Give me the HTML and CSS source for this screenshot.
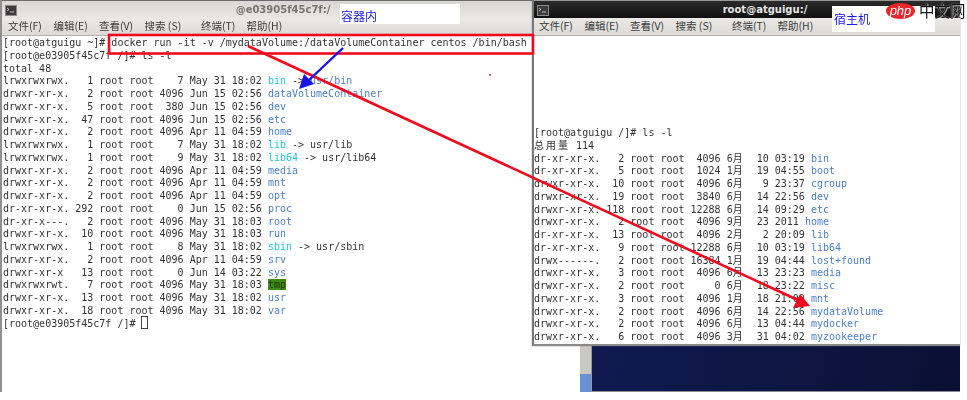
FILE: index.html
```html
<!DOCTYPE html>
<html lang="zh">
<head>
<meta charset="utf-8">
<title>docker volume</title>
<link rel="stylesheet" href="styles.css">
</head>
<body>
<main class="desktop">
  <section class="strip">
    <div class="scroll"><div class="scroll-thumb"></div></div>
    <div class="wallpaper"></div>
  </section>

  <section class="window win-left">
    <header class="titlebar">
      <svg class="term-icon" viewBox="0 0 12 11"><rect x=".5" y=".5" width="11" height="10" fill="#3c3c3c" stroke="#8a8a8a"/><path d="M2 3l2 1.5L2 6M5 7h4" fill="none" stroke="#ddd" stroke-width=".8"/></svg>
      <span class="title-text">@e03905f45c7f:/</span>
    </header>
    <nav class="menubar">
      <span>文件(F)</span><span>编辑(E)</span><span>查看(V)</span><span class="m-search">搜索 (S)</span><span>终端(T)</span><span>帮助(H)</span>
    </nav>
    <pre class="term">[root@atguigu ~]# docker run -it -v /mydataVolume:/dataVolumeContainer centos /bin/bash
[root@e03905f45c7f /]# ls -l
total 48
lrwxrwxrwx.   1 root root    7 May 31 18:02 <span class="ln">bin</span> -&gt; <span class="dir">usr/bin</span>
drwxr-xr-x.   2 root root 4096 Jun 15 02:56 <span class="dir">dataVolumeContainer</span>
drwxr-xr-x.   5 root root  380 Jun 15 02:56 <span class="dir">dev</span>
drwxr-xr-x.  47 root root 4096 Jun 15 02:56 <span class="dir">etc</span>
drwxr-xr-x.   2 root root 4096 Apr 11 04:59 <span class="dir">home</span>
lrwxrwxrwx.   1 root root    7 May 31 18:02 <span class="ln">lib</span> -&gt; <span class="target">usr/lib</span>
lrwxrwxrwx.   1 root root    9 May 31 18:02 <span class="ln">lib64</span> -&gt; <span class="target">usr/lib64</span>
drwxr-xr-x.   2 root root 4096 Apr 11 04:59 <span class="dir">media</span>
drwxr-xr-x.   2 root root 4096 Apr 11 04:59 <span class="dir">mnt</span>
drwxr-xr-x.   2 root root 4096 Apr 11 04:59 <span class="dir">opt</span>
dr-xr-xr-x. 292 root root    0 Jun 15 02:56 <span class="dir">proc</span>
dr-xr-x---.   2 root root 4096 May 31 18:03 <span class="dir">root</span>
drwxr-xr-x.  10 root root 4096 May 31 18:03 <span class="dir">run</span>
lrwxrwxrwx.   1 root root    8 May 31 18:02 <span class="ln">sbin</span> -&gt; <span class="target">usr/sbin</span>
drwxr-xr-x.   2 root root 4096 Apr 11 04:59 <span class="dir">srv</span>
drwxr-xr-x   13 root root    0 Jun 14 03:22 <span class="dir">sys</span>
drwxrwxrwt.   7 root root 4096 May 31 18:03 <span class="sticky">tmp</span>
drwxr-xr-x.  13 root root 4096 May 31 18:02 <span class="dir">usr</span>
drwxr-xr-x.  18 root root 4096 May 31 18:02 <span class="dir">var</span>
[root@e03905f45c7f /]# <span class="cursor"></span></pre>
  </section>

  <section class="window win-right">
    <header class="titlebar dark">
      <svg class="term-icon" viewBox="0 0 12 11"><rect x=".5" y=".5" width="11" height="10" fill="#3c3c3c" stroke="#8a8a8a"/><path d="M2 3l2 1.5L2 6M5 7h4" fill="none" stroke="#ddd" stroke-width=".8"/></svg>
      <span class="title-text">root@atguigu:/</span>
    </header>
    <nav class="menubar">
      <span>文件(F)</span><span>编辑(E)</span><span>查看(V)</span><span class="m-search">搜索 (S)</span><span>终端(T)</span><span>帮助(H)</span>
    </nav>
    <pre class="term term-right">[root@atguigu /]# ls -l
<span class="wide">总用量</span> 114
dr-xr-xr-x.   2 root root  4096 6<span class="wide">月</span>  10 03:19 <span class="dir">bin</span>
dr-xr-xr-x.   5 root root  1024 1<span class="wide">月</span>  19 04:55 <span class="dir">boot</span>
drwxr-xr-x.  10 root root  4096 6<span class="wide">月</span>   9 23:37 <span class="dir">cgroup</span>
drwxr-xr-x.  19 root root  3840 6<span class="wide">月</span>  14 22:56 <span class="dir">dev</span>
drwxr-xr-x. 118 root root 12288 6<span class="wide">月</span>  14 09:29 <span class="dir">etc</span>
drwxr-xr-x.   2 root root  4096 9<span class="wide">月</span>  23 2011 <span class="dir">home</span>
dr-xr-xr-x.  13 root root  4096 2<span class="wide">月</span>   2 20:09 <span class="dir">lib</span>
dr-xr-xr-x.   9 root root 12288 6<span class="wide">月</span>  10 03:19 <span class="dir">lib64</span>
drwx------.   2 root root 16384 1<span class="wide">月</span>  19 04:44 <span class="dir">lost+found</span>
drwxr-xr-x.   3 root root  4096 6<span class="wide">月</span>  13 23:23 <span class="dir">media</span>
drwxr-xr-x.   2 root root     0 6<span class="wide">月</span>  18 23:22 <span class="dir">misc</span>
drwxr-xr-x.   3 root root  4096 1<span class="wide">月</span>  18 21:00 <span class="dir">mnt</span>
drwxr-xr-x.   2 root root  4096 6<span class="wide">月</span>  14 22:56 <span class="dir">mydataVolume</span>
drwxr-xr-x.   2 root root  4096 6<span class="wide">月</span>  13 04:44 <span class="dir">mydocker</span>
drwxr-xr-x.   6 root root  4096 3<span class="wide">月</span>  31 04:02 <span class="dir">myzookeeper</span></pre>
  </section>

  <div class="label label-left">容器内</div>
  <div class="label label-right">宿主机</div>

  <svg class="marks" viewBox="0 0 967 400" aria-hidden="true">
    <rect x="109" y="35" width="424" height="18.5" fill="none" stroke="#f00a1e" stroke-width="2.6"/>
    <line x1="248" y1="46" x2="800" y2="301" stroke="#f00a1e" stroke-width="2.6"/>
    <polygon points="810,306 793,308 800,294" fill="#f00a1e"/>
    <line x1="343" y1="48" x2="308" y2="81" stroke="#1414e6" stroke-width="2.4"/>
    <polygon points="299,89 304,74 314,84" fill="#1414e6"/>
    <circle cx="490" cy="75" r="1" fill="#e8283c"/>
  </svg>

  <div class="watermark">
    <span class="php">php</span><span class="cn">中文网</span>
  </div>
</main>
</body>
</html>
```

FILE: styles.css
```css
* { box-sizing: border-box; }
html, body { margin: 0; background: #fff; overflow: hidden; }

.desktop {
  position: relative;
  width: 967px;
  height: 400px;
  background: #fff;
}

.window {
  position: absolute;
  top: 0;
  display: flex;
  flex-direction: column;
  background: #fff;
  filter: blur(.45px);
}
.win-left {
  left: 0;
  width: 532px;
  height: 392px;
  border-left: 2px solid #8f8f8f;
}
.win-right {
  left: 532px;
  width: 428px;
  height: 346px;
  border-left: 2px solid #777;
  border-bottom: 2px solid #8a8a8a;
  box-shadow: 0 0 1px #666;
}

.titlebar {
  position: relative;
  flex: none;
  height: 18px;
  display: flex;
  align-items: center;
  justify-content: center;
  background: linear-gradient(#d9d7d3, #e9e7e3);
  border-top: 1px solid #6b6b6b;
}
.titlebar.dark {
  background: linear-gradient(#2c2c2c, #101010);
  border-top-color: #999;
}
.term-icon {
  position: absolute;
  left: 3px;
  top: 4px;
  width: 12px;
  height: 11px;
}
.title-text {
  font: bold 10px "DejaVu Sans", sans-serif;
  color: #77756f;
  white-space: nowrap;
}
.win-left .title-text { margin-left: 32px; }
.dark .title-text { color: #e6e6e6; margin-left: 36px; }

.menubar {
  flex: none;
  height: 18px;
  display: flex;
  align-items: center;
  gap: 10.5px;
  padding-left: 6px;
  background: linear-gradient(#ebe9e5, #dcdad6);
  border-bottom: 1px solid #b4b2ae;
  font: 10.5px/1 "Noto Sans CJK SC", sans-serif;
  color: #3c3c3c;
  white-space: nowrap;
}
.menubar span { width: 35px; }
.menubar .m-search { width: 46px; }
.win-right .menubar { padding-left: 5px; }

.term {
  flex: 1;
  margin: 0;
  padding: 1px 0 0 1px;
  overflow: hidden;
  font: 10px/12.75px "DejaVu Sans Mono", "Noto Sans CJK SC", monospace;
  color: #333;
  white-space: pre;
}
.term-right { padding-top: 91px; padding-left: 0; }

.dir { color: #4f80c8; }
.ln { color: #1fc8d0; }
.target { color: #333; }
.sticky { background: #3f8a10; color: #1a3a05; }
.cursor { display: inline-block; width: 7px; height: 13px; margin-top: -2px; border: 1px solid #444; vertical-align: top; }
.wide { font-family: "Noto Sans CJK SC", sans-serif; letter-spacing: 2px; line-height: 0; }

.strip {
  position: absolute;
  left: 580px;
  top: 346px;
  width: 380px;
  height: 46px;
  display: flex;
}
.scroll {
  flex: none;
  width: 12px;
  display: flex;
  flex-direction: column;
  justify-content: flex-end;
  background: #c9c8c5;
  border-right: 1px solid #999;
}
.scroll-thumb { height: 18px; background: #6691d2; }
.wallpaper {
  flex: 1;
  background: linear-gradient(100deg, #101a50, #0d1540 60%, #0b1033);
  border-bottom: 1px solid #8a8c94;
}

.label {
  position: absolute;
  background: #fff;
  color: #1a1ae6;
  font: 12px/1 "Noto Sans CJK SC", sans-serif;
  filter: blur(.25px);
}
.label-left { left: 340px; top: 4px; width: 120px; height: 20px; padding: 6px 0 0 1px; }
.label-right { left: 832px; top: 6px; width: 103px; height: 26px; padding: 7px 0 0 2px; }

.marks {
  position: absolute;
  inset: 0;
  width: 967px;
  height: 400px;
  pointer-events: none;
}

.watermark {
  position: absolute;
  left: 886px;
  top: 3px;
  display: flex;
  align-items: center;
  gap: 4px;
}
.php {
  width: 29px;
  height: 16px;
  border-radius: 50%;
  background: #e9262c;
  color: #fff;
  font: italic 13px/15px "Liberation Sans", sans-serif;
  text-align: center;
}
.cn {
  font: 15.5px/1 "Noto Sans CJK SC", sans-serif;
  color: #111;
  text-shadow: 0 0 1px #fff, 1px 1px 0 rgba(255,255,255,.5);
  white-space: nowrap;
}
```
